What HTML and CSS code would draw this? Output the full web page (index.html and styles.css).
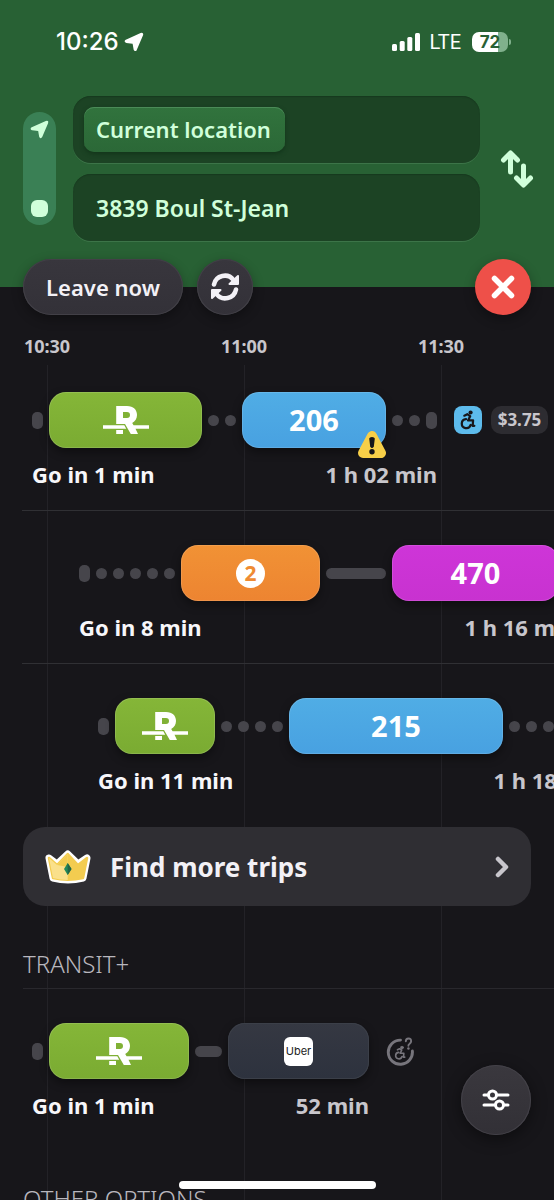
FILE: index.html
```html
<!DOCTYPE html>
<html lang="en">
<head>
<meta charset="utf-8">
<meta name="viewport" content="width=device-width, initial-scale=1">
<title>Trip planner</title>
<link rel="stylesheet" href="styles.css">
</head>
<body>
<svg class="symbols" aria-hidden="true">
  <symbol id="arrow" viewBox="0 0 20 20"><path d="M2.200 8.500 17 1.800Q18.800 1.200 18.200 3L12 17.500Q11.200 19 10.500 17.300L9.500 11.500Q9.300 10.900 8.700 10.800L2.400 10Q.8 9.400 2.200 8.500Z" fill="currentColor" stroke="currentColor" stroke-width="1.800" stroke-linejoin="round"/></symbol>
  <symbol id="rem" viewBox="0 0 46 28">
    <path fill="currentColor" fill-rule="evenodd" d="M13.200 0H24C30.500 0 34 3.800 34 9C34 12.700 32.200 15.500 29.200 16.900L30.600 19.200H46V22.700H32.500L35 28H27.800L22 18H13.200ZM20 6V12H24Q27 12 27 9T24 6Z"/>
    <path fill="currentColor" d="M0 19.200H21.300L23.200 22.700H0ZM13.200 24H20V28H13.200Z"/>
  </symbol>
  <symbol id="wheelchair" viewBox="0 0 20 24">
    <circle cx="12.500" cy="3" r="2.500" fill="currentColor"/>
    <path d="M5 6.800 8.500 5 12 7.400 9.500 12.500H15.500L15 19H17M7 11A5.400 5.400 0 1 0 12.500 18" fill="none" stroke="currentColor" stroke-width="2.700" stroke-linecap="round" stroke-linejoin="round"/>
  </symbol>
</svg>
<div class="app">
  <header class="header">
    <div class="status">
      <div class="status-time">10:26 <svg class="status-arrow"><use href="#arrow"/></svg></div>
      <div class="status-right">
        <svg class="signal" viewBox="0 0 28 18" fill="currentColor"><rect y="11" width="5" height="7" rx="1.500"/><rect x="7.700" y="8" width="5" height="10" rx="1.500"/><rect x="15.300" y="4" width="5" height="14" rx="1.500"/><rect x="23" width="5" height="18" rx="1.500"/></svg>
        <span class="network">LTE</span>
        <span class="battery">72</span>
      </div>
    </div>
    <form class="search">
      <div class="rail"><svg class="rail-arrow"><use href="#arrow"/></svg><span class="rail-stop"></span></div>
      <div class="fields">
        <button type="button" class="field" aria-label="Origin"><span class="chip">Current location</span></button>
        <input class="field field-text" type="text" aria-label="Destination" value="3839 Boul St-Jean">
      </div>
      <button type="button" class="swap" aria-label="Swap origin and destination">
        <svg viewBox="0 0 34 38" fill="none" stroke="currentColor" stroke-width="5" stroke-linecap="round" stroke-linejoin="round"><path d="M10.500 22V4M3.500 10 10.500 3 17.500 10M23.500 16V34M16.500 28 23.500 35 30.500 28"/></svg>
      </button>
    </form>
  </header>

  <div class="toolbar">
    <button type="button" class="pill leave">Leave now</button>
    <button type="button" class="pill round" aria-label="Refresh">
      <svg class="refresh" viewBox="0 0 30 28" fill="none" stroke="currentColor" stroke-width="4.500" stroke-linecap="round"><path d="M4 11.500A11 11 0 0 1 23.500 7M26 16.500A11 11 0 0 1 6.500 21"/><path d="M28 3V11H19.500ZM2 25V17H10.500Z" fill="currentColor" stroke-width="2" stroke-linejoin="round"/></svg>
    </button>
    <button type="button" class="pill round close" aria-label="Close">
      <svg viewBox="0 0 24 24" class="close-icon" fill="none" stroke="currentColor" stroke-width="5.500" stroke-linecap="round"><path d="M3.500 3.500 20.500 20.500M20.500 3.500 3.500 20.500"/></svg>
    </button>
  </div>

  <div class="hours"><span>10:30</span><span>11:00</span><span>11:30</span></div>

  <main class="timeline">
    <article class="trip trip-a">
      <div class="legs">
        <i class="cap"></i>
        <div class="leg green leg-153"><svg class="rem"><use href="#rem"/></svg></div>
        <i class="dot"></i><i class="dot"></i>
        <div class="leg blue leg-144">206
          <svg class="alert" viewBox="0 0 28 27"><path d="M14 5 23 22H5Z" fill="#f8cf48" stroke="#f8cf48" stroke-width="10" stroke-linejoin="round"/><path d="M11.200 7.500Q11.500 6 14 6T16.800 7.500L15.800 15.500Q15 17 14 17T12.200 15.500Z" fill="#17161a"/><circle cx="14" cy="20.800" r="2.700" fill="#17161a"/></svg>
        </div>
        <i class="dot"></i><i class="dot"></i><i class="cap"></i>
      </div>
      <div class="extras">
        <span class="access"><svg class="chair"><use href="#wheelchair"/></svg></span>
        <span class="price">$3.75</span>
      </div>
      <div class="info"><strong>Go in 1 min</strong><span>1 h 02 min</span></div>
    </article>

    <article class="trip trip-b">
      <div class="legs">
        <i class="cap"></i><i class="dot"></i><i class="dot"></i><i class="dot"></i><i class="dot"></i><i class="dot"></i>
        <div class="leg orange leg-139"><span class="metro">2</span></div>
        <i class="wait wait-60"></i>
        <div class="leg purple leg-167">470</div>
        <i class="cap"></i>
      </div>
      <div class="info"><strong>Go in 8 min</strong><span>1 h 16 min</span></div>
    </article>

    <article class="trip trip-c">
      <div class="legs">
        <i class="cap"></i>
        <div class="leg green leg-100"><svg class="rem"><use href="#rem"/></svg></div>
        <i class="dot"></i><i class="dot"></i><i class="dot"></i><i class="dot"></i>
        <div class="leg blue leg-214">215</div>
        <i class="dot"></i><i class="dot"></i><i class="dot"></i><i class="dot"></i><i class="dot"></i><i class="cap"></i>
      </div>
      <div class="info"><strong>Go in 11 min</strong><span>1 h 18 min</span></div>
    </article>

    <button type="button" class="more">
      <svg class="crown" viewBox="0 0 46 34">
        <path d="M4 8 12 14 22.700 4 33 14 42 8 38 28Q23 32 8 28Z" fill="#fff" stroke="#fff" stroke-width="7" stroke-linejoin="round"/>
        <path d="M4 8 12 15 22.700 4 33 15 42 8 38 28Q23 31.500 8 28Z" fill="#f3cc50" stroke="#f3cc50" stroke-width="2.500" stroke-linejoin="round"/>
        <path d="M4 8 12 15 22.700 4V30Q15 30 8 28Z" fill="#fae08b"/>
        <path d="M12 15 22.700 4V17Z" fill="#f3cc50"/>
        <path d="M22.700 13 26.500 19 22.700 25 19 19Z" fill="#23885a"/>
        <path d="M22.700 13 26.500 19 22.700 25Z" fill="#226444"/>
      </svg>
      <span>Find more trips</span>
      <svg class="chevron" viewBox="0 0 14 22" fill="none" stroke="currentColor" stroke-width="4.500" stroke-linecap="round" stroke-linejoin="round"><path d="M3 3 11 11 3 19"/></svg>
    </button>

    <h2 class="section-title">TRANSIT+</h2>
    <section class="section">
      <article class="trip trip-a">
        <div class="legs">
          <i class="cap"></i>
          <div class="leg green leg-140"><svg class="rem"><use href="#rem"/></svg></div>
          <i class="wait wait-27"></i>
          <div class="leg slate leg-141"><span class="uber">Uber</span></div>
        </div>
        <div class="extras">
          <svg class="unknown" viewBox="0 0 30 30" fill="none" stroke="currentColor" stroke-linecap="round"><path d="M15 3.200A12.500 12.500 0 1 0 27.300 14.500" stroke-width="3"/><path d="M20.500 4.500Q20.500 1.500 23.300 1.500T26 4.500Q26 6 24.500 7T23.200 9" stroke-width="2"/><circle cx="23.200" cy="11.800" r="1.300" fill="currentColor" stroke="none"/><use href="#wheelchair" x="8.500" y="9" width="13" height="15"/></svg>
        </div>
        <div class="info"><strong>Go in 1 min</strong><span>52 min</span></div>
      </article>
    </section>
    <h2 class="section-title other">OTHER OPTIONS</h2>
  </main>

  <button type="button" class="filters" aria-label="Trip options">
    <svg viewBox="0 0 28 22" fill="none" stroke="currentColor" stroke-width="3" stroke-linecap="round"><path d="M2 6H6M15 6H26M2 16H13M22 16H26"/><circle cx="10.500" cy="6" r="4"/><circle cx="17.500" cy="16" r="4"/></svg>
  </button>
  <div class="home-bar"></div>
</div>
</body>
</html>
```
FILE: styles.css
```css
* { box-sizing: border-box; }
body {
  margin: 0;
  background: #17161a;
  color: #f3f1f6;
  font-family: "Noto Sans", "Open Sans", sans-serif;
}
button, input { font: inherit; color: inherit; border: 0; padding: 0; margin: 0; background: none; }
svg { display: block; flex: none; }
.symbols { position: absolute; width: 0; height: 0; }
.app { position: relative; height: 100vh; overflow: hidden; display: flex; flex-direction: column; }

.header { flex: none; background: #286134; padding-bottom: 46px; color: #d0ffda; }
.status {
  display: flex; justify-content: space-between; align-items: center;
  padding: 27px 46px 0 56px; height: 56px; color: #fff;
}
.status-time { display: flex; align-items: center; gap: 5px; font: 500 24px/30px Inter, sans-serif; }
.status-arrow { width: 20px; height: 20px; }
.status-right { display: flex; align-items: center; }
.signal { width: 28px; height: 18px; }
.network { margin: 0 11px 0 10px; font: 400 20px/30px Roboto, sans-serif; }
.battery {
  position: relative; width: 36px; height: 20px; border-radius: 7px;
  background: linear-gradient(90deg, #fff 72%, #80b08c 72%);
  color: #286134; font: 700 17px/20px Inter, sans-serif; text-align: center;
}
.battery::after {
  content: ""; position: absolute; left: 37px; top: 7px;
  width: 2px; height: 6px; border-radius: 0 2px 2px 0; background: #80b08c;
}

.search { display: flex; align-items: center; padding: 40px 20px 0 23px; }
.rail {
  width: 33px; height: 113px; border-radius: 17px; background: #3a8055;
  display: flex; flex-direction: column; align-items: center; justify-content: space-between; padding: 8px 0;
}
.rail-arrow { width: 19px; height: 19px; }
.rail-stop { width: 17px; height: 17px; border-radius: 6px; background: currentColor; }
.fields { flex: 1; min-width: 0; margin: 0 20px 0 17px; display: flex; flex-direction: column; gap: 11px; }
.field {
  display: flex; align-items: center; width: 100%; height: 67px; padding: 0 11px;
  border-radius: 18px; background: #1c4324; box-shadow: 0 1px 0 #3c7448, inset 0 1px 1px #173a1f;
  font-size: 22px; font-weight: 600; line-height: 30px;
}
.field-text { padding: 0 23px; font-size: 23px; }
.chip {
  padding: 7px 14px 8px 12px; border-radius: 10px;
  background: linear-gradient(#31733d, #2b6837);
  box-shadow: inset 0 1px 0 #4b8b58, 0 2px 4px #12351a;
}
.swap { width: 34px; height: 38px; }

.toolbar { flex: none; display: flex; gap: 14px; padding: 0 23px; margin-top: -28px; }
.pill {
  height: 56px; border-radius: 28px; background: linear-gradient(#38363d, #333138);
  box-shadow: inset 0 0 0 1px #424047, 0 4px 12px #0005;
  display: flex; align-items: center; justify-content: center;
}
.leave { width: 160px; font-size: 22px; font-weight: 600; }
.round { width: 56px; }
.refresh { width: 30px; height: 28px; }
.close { margin-left: auto; background: #ee5049; color: #fff; box-shadow: 0 4px 12px #0005; }
.close-icon { width: 24px; height: 24px; }

.hours { flex: none; display: flex; gap: 103px; padding-top: 19px; height: 43px; }
.hours span { width: 94px; text-align: center; color: #c8c6cc; font-size: 18px; font-weight: 700; line-height: 24px; }

.timeline {
  flex: 1; min-height: 0; overflow: hidden;
  background: linear-gradient(90deg, #232227 1px, transparent 1px) 47px 7px / 197px 100vh repeat-x;
}
.trip {
  display: grid; grid-template-columns: max-content max-content;
  padding: 34px 0 22px; column-gap: 17px;
}
.trip-a { padding-left: 32px; }
.trip-b { padding-left: 79px; }
.trip-c { padding-left: 98px; }
.timeline > .trip-a, .timeline > .trip-b {
  border-bottom: 1px solid;
  border-image: linear-gradient(90deg, transparent 23px, #303034 23px) 1;
}
.legs { display: flex; align-items: center; gap: 6px; height: 56px; }
.cap, .dot, .wait { flex: none; background: #46454b; }
.cap { width: 11px; height: 17px; border-radius: 5px; }
.dot { width: 11px; height: 11px; border-radius: 50%; }
.wait { height: 11px; border-radius: 6px; }
.wait-27 { width: 27px; }
.wait-60 { width: 60px; }
.leg {
  position: relative; flex: none; height: 56px; border-radius: 17px; color: #fff;
  display: flex; align-items: center; justify-content: center;
  font-size: 29px; font-weight: 700; line-height: 36px;
  box-shadow: inset 0 0 0 1px #ffffff20, 0 4px 10px #0006;
}
.leg-100 { width: 100px; }
.leg-139 { width: 139px; }
.leg-140 { width: 140px; }
.leg-141 { width: 141px; }
.leg-144 { width: 144px; }
.leg-153 { width: 153px; }
.leg-167 { width: 167px; }
.leg-214 { width: 214px; }
.green { background: linear-gradient(#85b638, #7aab32); }
.blue { background: linear-gradient(#50ade5, #48a1e1); }
.orange { background: linear-gradient(#f19235, #ed8431); }
.purple { background: linear-gradient(#ce35d8, #c832d0); }
.slate { background: linear-gradient(#353842, #2d323e); box-shadow: inset 0 0 0 1px #3b3f48, 0 4px 10px #0006; }
.rem { width: 46px; height: 28px; }
.alert { position: absolute; right: 0; bottom: -10px; width: 28px; height: 27px; }
.metro {
  width: 29px; height: 29px; border-radius: 50%; background: #fff; color: #ef8b33;
  font-size: 21px; line-height: 29px; text-align: center;
}
.uber {
  width: 29px; height: 29px; border-radius: 6px; background: #fff; color: #222;
  font: 400 11px/29px Inter, sans-serif; text-align: center;
}
.extras { display: flex; align-items: center; gap: 9px; }
.access {
  width: 28px; height: 28px; border-radius: 8px; background: #5dbbec; color: #17161a;
  display: flex; align-items: center; justify-content: center;
}
.chair { width: 17px; height: 20px; }
.price {
  width: 57px; height: 28px; border-radius: 10px; background: #2d2c31; color: #c8c6cc;
  font-size: 17px; font-weight: 700; line-height: 28px; text-align: center;
}
.unknown { width: 29px; height: 29px; color: #77757c; }
.info {
  grid-column: 1; margin-top: 12px; display: flex; justify-content: space-between;
  font-size: 22px; font-weight: 700; line-height: 28px; color: #c8c6cc; white-space: nowrap;
}
.info strong { color: #f8f7fa; font-weight: inherit; }

.more {
  display: flex; align-items: center; width: calc(100% - 46px); height: 79px;
  margin: 11px 23px 0; padding: 0 22px; border-radius: 22px; background: #2f2e33;
  font-size: 26px; font-weight: 700; line-height: 36px;
}
.crown { width: 46px; height: 34px; margin-right: 19px; }
.chevron { width: 14px; height: 22px; margin-left: auto; color: #c8c6cc; }

.section-title {
  margin: 44px 23px 10px; color: #b9b7be;
  font-size: 24px; font-weight: 300; line-height: 28px;
}
.section { border-top: 1px solid #29282d; margin-left: 23px; }
.section .trip-a { padding-left: 9px; }

.filters {
  position: absolute; right: 23px; bottom: 65px; width: 70px; height: 70px; border-radius: 50%;
  background: linear-gradient(#3a383e, #323036); color: #fff;
  box-shadow: inset 0 0 0 1px #434148, 0 4px 16px #0007;
  display: flex; align-items: center; justify-content: center;
}
.filters svg { width: 28px; height: 22px; }
.home-bar {
  position: absolute; left: 50%; bottom: 11px; width: 197px; height: 8px; margin-left: -98px;
  border-radius: 4px; background: #fff;
}
```
